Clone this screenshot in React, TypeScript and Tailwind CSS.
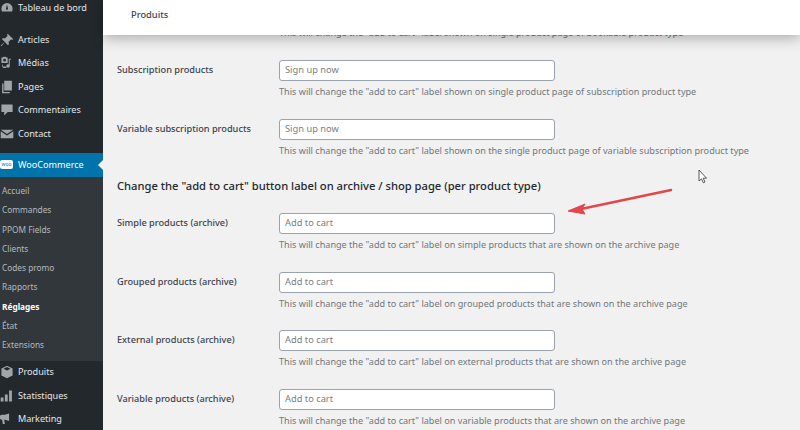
import type { ReactNode } from 'react'

function Icon({ children }: { children: ReactNode }) {
  return (
    <svg viewBox="0 0 20 20" className="w-[14px] h-[14px] flex-none fill-[#a0a5aa]">
      {children}
    </svg>
  )
}

const topItems: { label: string; icon: ReactNode }[] = [
  {
    label: 'Articles',
    icon: <path d="M11 1l8 8-2 1-1-1-4 4 1 3-2 1-4-4-5 6-1-1 6-5-4-4 1-2 3 1 4-4-1-1z" />,
  },
  {
    label: 'Médias',
    icon: (
      <path d="M2 2h2l1-1h3l1 1h2v8H2V2zm4.500 2a2 2 0 100 4 2 2 0 000-4zM13 4h3v1h-2v9a2.500 2.500 0 11-1.500-2V4zM3 12h1v2a1 1 0 001 1h4v2H5a3 3 0 01-2-3v-2z" />
    ),
  },
  {
    label: 'Pages',
    icon: <path d="M6 1h11v14H6V1zM3 5h2v12h9v2H3V5z" />,
  },
  {
    label: 'Commentaires',
    icon: <path d="M2 2h16v11h-7l-5 5v-5H2V2z" />,
  },
  {
    label: 'Contact',
    icon: <path d="M1 4h18l-9 6-9-6zm0 2l9 6 9-6v10H1V6z" />,
  },
]

const subItems = ['Accueil', 'Commandes', 'PPOM Fields', 'Clients', 'Codes promo', 'Rapports', 'Réglages', 'État', 'Extensions']

const bottomItems: { label: string; icon: ReactNode }[] = [
  {
    label: 'Produits',
    icon: <path d="M10 1l8 4v10l-8 4-8-4V5l8-4zm0 2L5 5.500 10 8l5-2.500L10 3z" />,
  },
  {
    label: 'Statistiques',
    icon: <path d="M1 12h4v6H1v-6zm6-4h4v10H7V8zm6-6h4v16h-4V2z" />,
  },
  {
    label: 'Marketing',
    icon: (
      <path d="M15 3a4 4 0 010 9 2 2 0 000-9zM13 2v11L7 11H6l1 6H4l-1-6a3.500 3.500 0 010-7h4l6-2z" />
    ),
  },
]

const topFields = [
  {
    label: 'Subscription products',
    placeholder: 'Sign up now',
    help: 'This will change the "add to cart" label shown on single product page of subscription product type',
  },
  {
    label: 'Variable subscription products',
    placeholder: 'Sign up now',
    help: 'This will change the "add to cart" label shown on the single product page of variable subscription product type',
  },
]

const archiveFields = [
  {
    label: 'Simple products (archive)',
    placeholder: 'Add to cart',
    help: 'This will change the "add to cart" label on simple products that are shown on the archive page',
  },
  {
    label: 'Grouped products (archive)',
    placeholder: 'Add to cart',
    help: 'This will change the "add to cart" label on grouped products that are shown on the archive page',
  },
  {
    label: 'External products (archive)',
    placeholder: 'Add to cart',
    help: 'This will change the "add to cart" label on external products that are shown on the archive page',
  },
  {
    label: 'Variable products (archive)',
    placeholder: 'Add to cart',
    help: 'This will change the "add to cart" label on variable products that are shown on the archive page',
  },
]

function MenuRow({ label, icon }: { label: string; icon: ReactNode }) {
  return (
    <div className="h-[23.500px] flex items-center gap-[4px] text-[#e4e6e8] text-[9.100px]">
      <Icon>{icon}</Icon>
      <span>{label}</span>
    </div>
  )
}

function Field({ label, placeholder, help }: { label: string; placeholder: string; help: string }) {
  return (
    <div className="flex h-[58.500px]">
      <label className="w-[162px] flex-none text-[9.200px] font-medium text-[#3c434a] leading-[19px]">{label}</label>
      <div>
        <div className="w-[276px] h-[21px] bg-white border border-[#9aa3ac] rounded-[3px] px-[5px] text-[9.300px] leading-[18px] text-[#7a7f85]">
          {placeholder}
        </div>
        <p className="mt-[4px] text-[9.100px] leading-[13px] text-[#72777c] whitespace-nowrap">{help}</p>
      </div>
    </div>
  )
}

export default function App() {
  return (
    <div className='font-["Noto_Sans",sans-serif] relative w-[800px] h-[430px] overflow-hidden flex bg-[#f1f1f1]'>
      <aside className="w-[103px] flex-none h-full bg-[#23282d] overflow-hidden">
        <div className="h-[16px] flex items-center gap-[4px] text-[#e4e6e8] text-[9.100px]">
          <Icon>
            <path d="M10 3a8 8 0 018 8c0 2-.5 3-1 4H3c-.5-1-1-2-1-4a8 8 0 018-8zm0 2L8.500 11a1.500 1.500 0 103 0L10 5z" />
          </Icon>
          <span>Tableau de bord</span>
        </div>
        <div className="mt-[12px]">
          {topItems.map((item) => (
            <MenuRow key={item.label} label={item.label} icon={item.icon} />
          ))}
        </div>
        <div className="relative mt-[7px] h-[24px] bg-[#0073aa] flex items-center gap-[5px] text-white text-[9.100px]">
          <span className="w-[13px] h-[9px] flex-none bg-white rounded-[2px] text-[#0073aa] text-[5px] leading-[9px] text-center">woo</span>
          <span>WooCommerce</span>
          <span className="absolute right-0 top-[7px] border-y-[5px] border-r-[5px] border-y-transparent border-r-[#f1f1f1]" />
        </div>
        <div className="bg-[#32373c] h-[184px] pt-[5px] pl-[2px]">
          {subItems.map((item) => (
            <div
              key={item}
              className={`h-[19.300px] flex items-center text-[8.300px] ${
                item === 'Réglages' ? 'text-white font-bold' : 'text-[#b4b9be]'
              }`}
            >
              {item}
            </div>
          ))}
        </div>
        {bottomItems.map((item) => (
          <MenuRow key={item.label} label={item.label} icon={item.icon} />
        ))}
      </aside>

      <main className="flex-1 min-w-0 pl-[14px] pt-[26px]">
        <p className="ml-[162px] text-[9.100px] leading-[13px] text-[#72777c] whitespace-nowrap">
          This will change the "add to cart" label shown on single product page of bookable product type
        </p>
        <div className="mt-[21px]">
          {topFields.map((f) => (
            <Field key={f.label} {...f} />
          ))}
        </div>
        <h2 className="mt-[1px] text-[11.200px] leading-[16px] font-medium text-[#23282d]">
          Change the "add to cart" button label on archive / shop page (per product type)
        </h2>
        <div className="mt-[19px]">
          {archiveFields.map((f) => (
            <Field key={f.label} {...f} />
          ))}
        </div>
      </main>

      <header className="absolute left-[103px] right-0 top-0 h-[35px] bg-white shadow-[0_3px_14px_rgba(0,0,0,0.3)] pl-[28px] pt-[8px] text-[9.300px] leading-[14px] font-medium text-[#3c434a]">
        Produits
      </header>

      <svg viewBox="0 0 110 40" className="absolute left-[565px] top-[185px] w-[110px] h-[40px]">
        <path d="M106 5L16 24" stroke="#e2474b" strokeWidth="2.500" strokeLinecap="round" fill="none" />
        <path d="M3 26l17-7-3 5 3 5z" fill="#e2474b" stroke="#e2474b" strokeWidth="1" strokeLinejoin="round" />
      </svg>

      <svg viewBox="0 0 10 15" className="absolute left-[698px] top-[169px] w-[10px] h-[15px]">
        <path d="M1 1v11l2.500-2.200 1.800 4 1.700-.8-1.800-3.800H8.500L1 1z" fill="#fff" stroke="#333" strokeWidth="0.800" strokeLinejoin="round" />
      </svg>
    </div>
  )
}
